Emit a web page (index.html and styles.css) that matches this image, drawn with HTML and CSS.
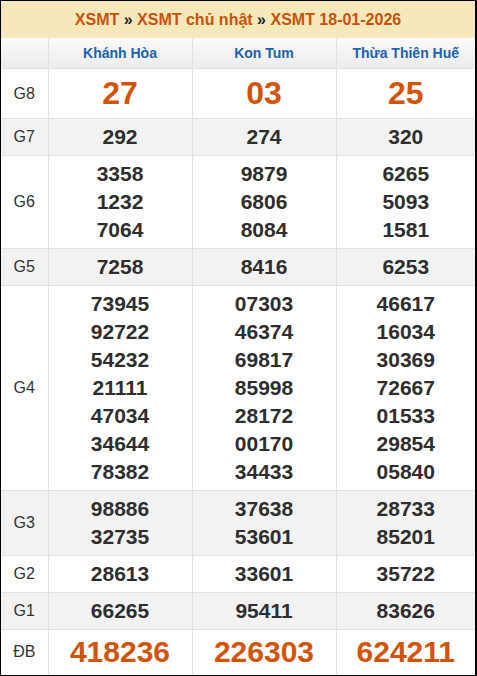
FILE: index.html
```html
<!DOCTYPE html>
<html lang="vi">
<head>
<meta charset="utf-8">
<title>XSMT 18-01-2026</title>
<link rel="stylesheet" href="styles.css">
</head>
<body>
<div class="box">
  <div class="title"><span class="lnk">XSMT</span> <span class="sep">»</span> <span class="lnk">XSMT chủ nhật</span> <span class="sep">»</span> <span class="lnk">XSMT 18-01-2026</span></div>
  <table class="kq">
    <colgroup>
      <col class="c-label"><col class="c-prov"><col class="c-prov"><col class="c-last">
    </colgroup>
    <thead>
      <tr class="head"><th></th><th>Khánh Hòa</th><th>Kon Tum</th><th>Thừa Thiên Huế</th></tr>
    </thead>
    <tbody>
      <tr class="g8"><td class="lbl">G8</td><td class="big">27</td><td class="big">03</td><td class="big">25</td></tr>
      <tr class="alt"><td class="lbl">G7</td><td>292</td><td>274</td><td>320</td></tr>
      <tr><td class="lbl">G6</td><td>3358<br>1232<br>7064</td><td>9879<br>6806<br>8084</td><td>6265<br>5093<br>1581</td></tr>
      <tr class="alt"><td class="lbl">G5</td><td>7258</td><td>8416</td><td>6253</td></tr>
      <tr><td class="lbl">G4</td>
        <td>73945<br>92722<br>54232<br>21111<br>47034<br>34644<br>78382</td>
        <td>07303<br>46374<br>69817<br>85998<br>28172<br>00170<br>34433</td>
        <td>46617<br>16034<br>30369<br>72667<br>01533<br>29854<br>05840</td></tr>
      <tr class="alt"><td class="lbl">G3</td><td>98886<br>32735</td><td>37638<br>53601</td><td>28733<br>85201</td></tr>
      <tr><td class="lbl">G2</td><td>28613</td><td>33601</td><td>35722</td></tr>
      <tr class="alt"><td class="lbl">G1</td><td>66265</td><td>95411</td><td>83626</td></tr>
      <tr class="db"><td class="lbl">ĐB</td><td class="big">418236</td><td class="big">226303</td><td class="big">624211</td></tr>
    </tbody>
  </table>
</div>
</body>
</html>
```

FILE: styles.css
```css
html, body {
  margin: 0;
  padding: 0;
  background: #fff;
}
.box {
  width: 477px;
  height: 676px;
  box-sizing: border-box;
  border: 1px solid #000;
  border-right-width: 2px;
  font-family: "Liberation Sans", Arial, sans-serif;
  overflow: hidden;
}
.title {
  height: 37px;
  line-height: 37px;
  background: #f6e8bb;
  font-weight: bold;
  font-size: 16px;
  text-align: center;
}
.title .lnk { color: #c9530c; }
.title .sep { color: #222; }
.kq {
  width: 474px;
  border-collapse: collapse;
  table-layout: fixed;
}
.c-label { width: 47px; }
.c-prov { width: 144px; }
.c-last { width: 139px; }
.kq th, .kq td {
  border: 1px solid #e1e1e1;
  text-align: center;
  padding: 4px 0;
  line-height: 28px;
  font-size: 21px;
  font-weight: bold;
  color: #2e2e2e;
  vertical-align: middle;
}
.kq tr > :first-child { border-left: none; }
.kq tr > :last-child { border-right: none; }
.kq thead th {
  border-top: none;
  height: 22px;
  line-height: 22px;
  font-size: 14px;
  color: #1a62b3;
  background: linear-gradient(#fafafa, #ececec);
}
.kq td.lbl {
  font-weight: normal;
  font-size: 16px;
  color: #333;
}
.kq tr.alt td { background: #f2f2f2; }
.kq tr.g8 td.big {
  font-size: 32px;
  line-height: 41px;
  color: #d2540a;
}
.kq tr.g8 td.lbl { line-height: 41px; }
.kq tr.db td.big {
  font-size: 30px;
  line-height: 36px;
  color: #d2540a;
}
.kq tr.db td { border-bottom: none; }
.kq tr.db td.lbl { line-height: 36px; }
```
